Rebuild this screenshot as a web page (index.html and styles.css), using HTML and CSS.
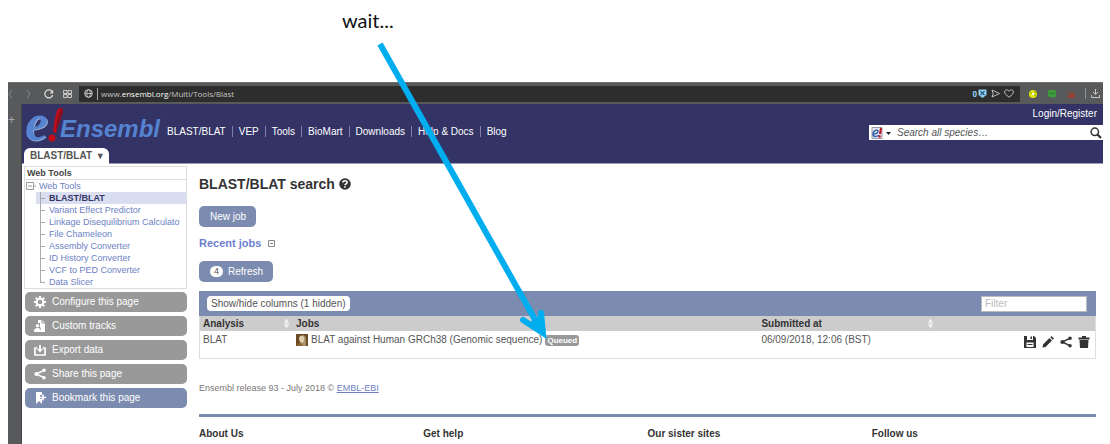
FILE: index.html
```html
<!DOCTYPE html>
<html lang="en">
<head>
<meta charset="utf-8">
<title>BLAST/BLAT search</title>
<link rel="stylesheet" href="styles.css">
</head>
<body>
<svg width="0" height="0" class="defs" aria-hidden="true">
  <symbol id="share" viewBox="0 0 12 12"><path d="M10.2 2.2 2.4 6l7.8 3.8" fill="none" stroke="currentColor" stroke-width="1.5"/><circle cx="10" cy="2.3" r="1.8" fill="currentColor"/><circle cx="2.3" cy="6" r="1.9" fill="currentColor"/><circle cx="10" cy="9.7" r="1.8" fill="currentColor"/></symbol>
  <symbol id="sort" viewBox="0 0 6 12"><path d="M3 0 6 5H0zM3 12 0 7h6z" fill="#f2f2f2"/><path d="M0 5h6v2H0z" fill="#e2e2e2"/></symbol>
</svg>
<p class="note">wait...</p>
<div class="browser">
  <div class="toolbar">
    <div class="controls">
      <svg width="5" height="10" viewBox="0 0 5 10"><path d="M4 1 1 5l3 4" fill="none" stroke="#85878a"/></svg>
      <svg width="5" height="10" viewBox="0 0 5 10"><path d="m1 1 3 4-3 4" fill="none" stroke="#85878a"/></svg>
      <svg width="10" height="10" viewBox="0 0 10 10"><path d="M8.2 2.7A4 4 0 1 0 8.7 6" fill="none" stroke="#d8d8d8" stroke-width="1.3"/><path d="M9.2.8v3.6H5.6z" fill="#d8d8d8"/></svg>
      <svg width="9" height="8" viewBox="0 0 9 8"><path d="M.5.5H4v3H.5zM5 .5h3.500v3H5zM.5 4.500H4v3H.5zM5 4.500h3.500v3H5z" fill="none" stroke="#c8c8c8"/></svg>
    </div>
    <div class="address">
      <svg width="9" height="9" viewBox="0 0 9 9" fill="none" stroke="#d0d0d0"><circle cx="4.500" cy="4.500" r="3.800"/><ellipse cx="4.500" cy="4.500" rx="1.800" ry="3.800" stroke-width=".8"/><path d="M1 4.500h7" stroke-width=".8"/></svg>
      <span class="url">www.<b>ensembl.org</b>/Multi/Tools/Blast</span>
      <span class="blocked">0</span>
      <svg width="9" height="9" viewBox="0 0 9 9"><path d="M.5.5h8V6l-4 3-4-3z" fill="#8fd0f4"/><path d="m2.500 2.200 4 4m0-4-4 4" stroke="#25516e" stroke-width="1.200"/></svg>
      <svg width="9" height="9" viewBox="0 0 9 9"><path d="M1 1l7.500 3.500L1 8l1.200-3.500z" fill="none" stroke="#c0c0c0"/></svg>
      <svg width="10" height="9" viewBox="0 0 10 9"><path d="M5 8.200C2 5.800.6 4.500.6 2.900.6.5 3.800 0 5 2.300 6.200 0 9.400.5 9.400 2.900 9.400 4.500 8 5.800 5 8.200z" fill="none" stroke="#c0c0c0"/></svg>
    </div>
    <div class="extensions">
      <svg width="10" height="10" viewBox="0 0 10 10"><circle cx="5" cy="5" r="4" fill="#e3e600"/><path d="m2 3.500 6 3M6 2l3 2" stroke="#7ba52a"/><circle cx="5" cy="5" r="1.200" fill="#fff"/></svg>
      <svg width="10" height="10" viewBox="0 0 10 10"><path d="M2 1h6l1 1v5L8 8H7l1 2-3-2H2L1 7V2z" fill="#3d9b3d"/><path d="M2.500 4.500h5" stroke="#246024" stroke-dasharray="1 1"/></svg>
      <svg width="10" height="10" viewBox="0 0 10 10"><path d="m1 2 5 4-3-4 4 3.500V2c2 2 2 4 1.500 5L9 9 7 8.500C5 9.500 2.500 9 1 7.500l3 0L1.500 5l3 1.500z" fill="#a04030"/></svg>
      <i></i>
      <svg width="9" height="9" viewBox="0 0 9 9"><path d="M4.500 0v5M2 3l2.500 2.500L7 3M.5 6v2.500h8V6" fill="none" stroke="#c8c8c8"/></svg>
    </div>
  </div>
  <div class="window">
    <aside class="rail">+</aside>
    <div class="site">
      <header class="masthead">
        <div class="brand">
          <svg class="logo" width="142" height="38" viewBox="0 0 142 38" role="img" aria-label="Ensembl">
            <text x="2" y="34" class="logo-e logo-shade">e</text>
            <text x="1" y="33" class="logo-e">e</text>
            <path d="M33 4c1-4 7-4 6 0-1 6-5 14-7 22l-3-1c1-8 2-15 4-21z" fill="#c40b18"/><path d="M37 2c2 0 2 1 2 3l-7 20c0-9 2-18 5-23z" fill="#86101f"/><circle cx="28" cy="31" r="3.500" fill="#c40b18"/>
            <text x="36" y="30" class="logo-name">Ensembl</text>
          </svg>
          <a class="tab" href="#">BLAST/BLAT <span>▼</span></a>
        </div>
        <nav class="menu">
          <a href="#">BLAST/BLAT</a><a href="#">VEP</a><a href="#">Tools</a><a href="#">BioMart</a><a href="#">Downloads</a><a href="#">Help &amp; Docs</a><a href="#">Blog</a>
        </nav>
        <div class="account">
          <a href="#">Login/Register</a>
          <form class="search">
            <svg width="20" height="12" viewBox="0 0 20 12"><path d="M1 .5h10v11H1z" fill="#e8eaf2" stroke="#9999a8"/><path d="M2 7c3 0 5-1 5-3S2 3.500 2 7s4 3 6 1" fill="none" stroke="#3864ad" stroke-width="1.500"/><path d="M10 1 9 7" stroke="#b8101e" stroke-width="2"/><circle cx="8.600" cy="9.500" r="1.200" fill="#b8101e"/><path d="M15 5h5l-2.500 3z" fill="#222"/></svg>
            <input type="text" aria-label="Search all species" placeholder="Search all species…">
            <button type="submit" aria-label="Search"><svg width="12" height="12" viewBox="0 0 12 12"><circle cx="4.800" cy="4.800" r="3.700" fill="none" stroke="#333" stroke-width="1.500"/><path d="m7.500 7.500 3.500 3.500" stroke="#333" stroke-width="2.200"/></svg></button>
          </form>
        </div>
      </header>
      <div class="body">
        <aside class="sidebar">
          <section class="tree">
            <h2>Web Tools</h2>
            <a class="root" href="#"><svg width="10" height="8" viewBox="0 0 10 8"><path d="M.5.5h7v7h-7zM2 4h4M8 4h2" fill="none" stroke="#999"/></svg>Web Tools</a>
            <ul>
              <li class="current"><a href="#">BLAST/BLAT</a></li>
              <li><a href="#">Variant Effect Predictor</a></li>
              <li><a href="#">Linkage Disequilibrium Calculato</a></li>
              <li><a href="#">File Chameleon</a></li>
              <li><a href="#">Assembly Converter</a></li>
              <li><a href="#">ID History Converter</a></li>
              <li><a href="#">VCF to PED Converter</a></li>
              <li><a href="#">Data Slicer</a></li>
            </ul>
          </section>
          <div class="actions">
            <button><svg width="12" height="12" viewBox="0 0 12 12"><circle cx="6" cy="6" r="3.300" fill="none" stroke="#fff" stroke-width="2"/><path d="M6 0v2.500M6 9.500V12M0 6h2.500M9.500 6H12M1.800 1.800l1.700 1.700M8.500 8.500l1.700 1.700M10.200 1.800 8.500 3.500M3.500 8.500l-1.700 1.700" stroke="#fff" stroke-width="2"/></svg>Configure this page</button>
            <button><svg width="12" height="12" viewBox="0 0 12 12"><path d="M4 0h4l3 3v9H7V9L6 7V3H4z" fill="#fff"/><path d="M8 0v3h3" fill="none" stroke="#999"/><circle cx="3.500" cy="5.800" r="1.800" fill="#fff"/><path d="M0 12c0-3 1-4 3.500-4S7 9 7 12z" fill="#fff"/></svg>Custom tracks</button>
            <button><svg width="12" height="12" viewBox="0 0 12 12"><path d="M3.500 4H1v7h10V4H8.500" fill="none" stroke="#fff" stroke-width="1.700"/><path d="M5 1h2v4h2L6 8.500 3 5h2z" fill="#fff"/></svg>Export data</button>
            <button><svg width="12" height="12"><use href="#share"/></svg>Share this page</button>
            <button class="primary"><svg width="12" height="12" viewBox="0 0 12 12"><path d="M2 0h6v3H6v4h2v5L5 9l-3 3z" fill="#fff"/><path d="M9 2.500v6M6 5.500h6" stroke="#fff" stroke-width="1.600"/></svg>Bookmark this page</button>
          </div>
        </aside>
        <main>
          <h1>BLAST/BLAT search <svg width="12" height="12" viewBox="0 0 12 12"><circle cx="6" cy="6" r="5.800" fill="#333"/><path d="M3.900 4.600c0-2.500 4.200-2.500 4.200-.1C8.100 5.900 6 5.800 6 7.300" fill="none" stroke="#fff" stroke-width="1.600"/><path d="M5.200 8.200h1.600v1.600H5.200z" fill="#fff"/></svg></h1>
          <button class="pill">New job</button>
          <h2>Recent jobs <svg width="7" height="7" viewBox="0 0 7 7"><path d="M.5.500h6v6h-6zM2 3.500h3" fill="none" stroke="#888"/></svg></h2>
          <button class="pill"><span class="count">4</span>Refresh</button>
          <section class="jobs">
            <div class="jobs-bar">
              <button>Show/hide columns (1 hidden)</button>
              <input type="text" aria-label="Filter" placeholder="Filter">
            </div>
            <table>
              <colgroup><col class="c1"><col class="c2"><col class="c3"><col class="c4"></colgroup>
              <thead><tr>
                <th><div>Analysis<svg width="5" height="11"><use href="#sort"/></svg></div></th>
                <th>Jobs</th>
                <th><div>Submitted at<svg width="5" height="11"><use href="#sort"/></svg></div></th>
                <th aria-label="Actions"></th>
              </tr></thead>
              <tbody><tr>
                <td>BLAT</td>
                <td><div class="job"><svg width="12" height="12" viewBox="0 0 12 12"><path d="M0 0h12v12H0z" fill="#6c4a24"/><path d="M3 5c0-5 7-5 7 0v7H6z" fill="#a99370"/><path d="M3 4c1-3 5-3 5 0v3L6 9 4 8z" fill="#e0cfae"/><path d="M0 12 4 8l3 4z" fill="#8c6431"/></svg>BLAT against Human GRCh38 (Genomic sequence)<span class="status">Queued</span></div></td>
                <td>06/09/2018, 12:06 (BST)</td>
                <td><div class="tools">
                  <button aria-label="Save"><svg width="12" height="12" viewBox="0 0 12 12"><path d="M0 0h10l2 2v10H0z" fill="#333"/><path d="M3 0h6v4H3zM2.500 6.500h7V11h-7z" fill="#fff"/><path d="M6.500.5h1.500v2.500H6.500zM3.500 8h5v1h-5z" fill="#333"/></svg></button>
                  <button aria-label="Edit"><svg width="12" height="12" viewBox="0 0 12 12"><path d="M1 8.500 7.500 2 10 4.500 3.500 11 .5 11.500zM8.300 1.200 9.500 0 12 2.500l-1.200 1.200z" fill="#333"/></svg></button>
                  <button aria-label="Share"><svg width="12" height="12"><use href="#share"/></svg></button>
                  <button aria-label="Delete"><svg width="12" height="12" viewBox="0 0 12 12"><path d="M.5 1.500H4V0h4v1.500h3.500V3.500H.5zM1.500 4h9l-.5 8H2z" fill="#333"/></svg></button>
                </div></td>
              </tr></tbody>
            </table>
          </section>
          <p class="release">Ensembl release 93 - July 2018 © <a href="#">EMBL-EBI</a></p>
          <footer><h3>About Us</h3><h3>Get help</h3><h3>Our sister sites</h3><h3>Follow us</h3></footer>
        </main>
      </div>
    </div>
  </div>
</div>
<svg class="arrow" width="180" height="306" viewBox="0 0 180 306" aria-hidden="true"><path d="M10 4 168 285" stroke="#00adef" stroke-width="6" fill="none"/><path d="m153 280 20 13-2-20" stroke="#00adef" stroke-width="6" fill="none" stroke-linecap="round"/><path d="m160 282 14 15-2-24z" fill="#00adef"/></svg>
</body>
</html>
```
FILE: styles.css
```css
* { box-sizing: border-box; }
body {
  margin: 0;
  min-height: 100vh;
  display: flex;
  flex-direction: column;
  position: relative;
  background: #fff;
  color: #555;
  font: 10px/12px "Liberation Sans", Arial, sans-serif;
}
h1, h2, h3, p, ul { margin: 0; padding: 0; }
a { color: #6c7fc4; text-decoration: none; }
button, input { font: inherit; border: 0; margin: 0; padding: 0; }
svg { flex: none; }
.defs { position: absolute; }
.note { height: 82px; padding: 8px 0 0 342px; color: #111; font: 20px/24px Lato, sans-serif; }
.browser { flex: 1; display: flex; flex-direction: column; margin: 0 7px 0 8px; }
.toolbar { display: flex; align-items: center; height: 22px; background: #58595b; border-top: 1px solid #707173; }
.controls { display: flex; align-items: center; width: 71px; gap: 13px; }
.controls svg:nth-child(4) { margin-left: -4px; }
.address { flex: 1; display: flex; align-items: center; gap: 4px; height: 16px; padding: 0 6px 0 5px; background: #2d2d2d; color: #c4c4c4; font: 8px/12px "Open Sans", sans-serif; }
.url { flex: 1; border-left: 1px solid #aaa; padding-left: 3px; }
.url b { color: #fff; font-weight: 500; }
.blocked { color: #8fd0f4; font-weight: bold; margin-right: -3px; }
.extensions { display: flex; align-items: center; gap: 9px; padding: 0 3px 0 8px; }
.extensions i { width: 1px; height: 11px; background: #929395; }
.extensions i + svg { margin-left: -4px; }
.window { flex: 1; display: flex; }
.rail { width: 14px; padding-top: 10px; background: #58595b; border-right: 1px solid #444548; color: #aaa; font-size: 12px; }
.site { flex: 1; min-width: 0; }
.masthead { display: flex; height: 60px; background: #333366; border-bottom: 1px solid #9999b8; }
.brand { width: 145px; display: flex; flex-direction: column; align-items: flex-start; justify-content: space-between; padding: 3px 0 0 2px; }
.logo { overflow: visible; }
.logo-e { font: italic bold 52px "Liberation Serif", serif; fill: #5583d0; }
.logo-shade { fill: #91a9d9; }
.logo-name { font: italic bold 24px "Liberation Sans", sans-serif; fill: #5583d0; }
.tab { height: 16px; padding: 2px 4px 0 6px; border-radius: 6px 6px 0 0; background: #fff; color: #555; font-weight: bold; margin-bottom: -1px; white-space: nowrap; }
.tab span { font-size: 9px; margin-left: 1px; }
.menu { flex: 1; padding-top: 22px; white-space: nowrap; }
.menu a { color: #fff; padding-right: 6px; margin-right: 6px; border-right: 1px solid #8080a8; }
.menu a:last-child { border: 0; }
.account { width: 234px; display: flex; flex-direction: column; gap: 5px; padding-top: 3px; }
.account > a { align-self: flex-end; padding-right: 6px; color: #fff; line-height: 13px; }
.search { display: flex; align-items: center; gap: 6px; height: 15px; padding: 0 1px 0 2px; background: #fff; }
.search input { flex: 1; min-width: 0; background: none; font-style: italic; }
.search input::placeholder { color: #555; }
.search button { height: 12px; background: none; }
.body { display: flex; gap: 12px; padding: 2px 7px 0 2px; }
.sidebar { width: 163px; flex: none; }
.tree { border: 1px solid #ddd; white-space: nowrap; font-size: 9px; }
.tree h2 { padding-left: 2px; border-bottom: 1px solid #ddd; font-size: 9px; line-height: 12px; color: #444; }
.root { display: flex; align-items: center; gap: 3px; padding-left: 1px; }
.tree ul { list-style: none; margin-left: 11px; }
.tree li { display: flex; align-items: center; background: linear-gradient(#aaa, #aaa) 4px 0 / 1px 100% no-repeat; }
.tree li:last-child { background-size: 1px 50%; }
.tree li::before { content: ""; flex: none; width: 5px; height: 1px; margin: 0 4px 0 4px; background: #aaa; }
.tree li.current { background-color: #d9def0; font-weight: bold; }
.current a { color: #333366; }
.actions { display: flex; flex-direction: column; gap: 4px; padding: 3px 0 0 1px; }
.actions button { display: flex; align-items: center; gap: 6px; height: 20px; padding: 0 9px; border-radius: 5px; background: #999; color: #fff; }
.actions .primary { background: #7c8bb0; }
main { flex: 1; min-width: 0; padding-top: 9px; }
h1 { display: flex; align-items: center; gap: 4px; color: #333; font-size: 14px; line-height: 18px; margin-bottom: 13px; }
main h2 { display: flex; align-items: center; gap: 7px; color: #6c7fd0; font-size: 11px; line-height: 14px; margin: 9px 0 11px; }
.pill { display: flex; align-items: center; gap: 5px; height: 21px; padding: 0 10px 0 11px; border-radius: 5px; background: #7c8bb0; color: #fff; }
.count { width: 13px; line-height: 11px; border-radius: 6px; background: #fff; color: #555; font-size: 9px; }
.jobs { margin-top: 9px; border: 1px solid #ddd; border-top: 0; }
.jobs-bar { display: flex; align-items: center; justify-content: space-between; height: 25px; margin: 0 -1px; padding: 0 9px 0 8px; background: #7c8bb0; }
.jobs-bar button { height: 15px; padding: 0 4px; border-radius: 4px; background: #fff; color: #555; }
.jobs-bar input { width: 106px; height: 16px; padding: 0 3px; border: 1px solid #bbb; background: #fff; }
.jobs-bar input::placeholder { color: #bbb; }
table { width: 100%; table-layout: fixed; border-collapse: collapse; }
.c1 { width: 93px; }
.c2 { width: 52%; }
.c3 { width: 179px; }
th { padding: 0 0 0 3px; height: 15px; background: #ccc; color: #333; text-align: left; line-height: 15px; }
th div { display: flex; align-items: center; justify-content: space-between; padding-right: 4px; }
td { padding: 3px 0 0 3px; height: 27px; vertical-align: top; }
.job { display: flex; align-items: center; gap: 3px; white-space: nowrap; }
.status { padding: 0 2px; border-radius: 3px; background: #999; color: #fff; font-weight: bold; font-size: 8px; line-height: 11px; }
.tools { display: flex; justify-content: flex-end; gap: 6px; padding: 2px 5px 0 0; }
.tools button { height: 12px; background: none; color: #333; }
.release { margin-top: 23px; font-size: 9px; color: #777; }
.release a { text-decoration: underline; }
footer { display: grid; grid-template-columns: repeat(4, 1fr); margin-top: 20px; padding-top: 10px; border-top: 3px solid #7c8bb0; }
footer h3 { color: #333; font-size: 10px; line-height: 14px; }
.arrow { position: absolute; left: 370px; top: 40px; pointer-events: none; }
```
